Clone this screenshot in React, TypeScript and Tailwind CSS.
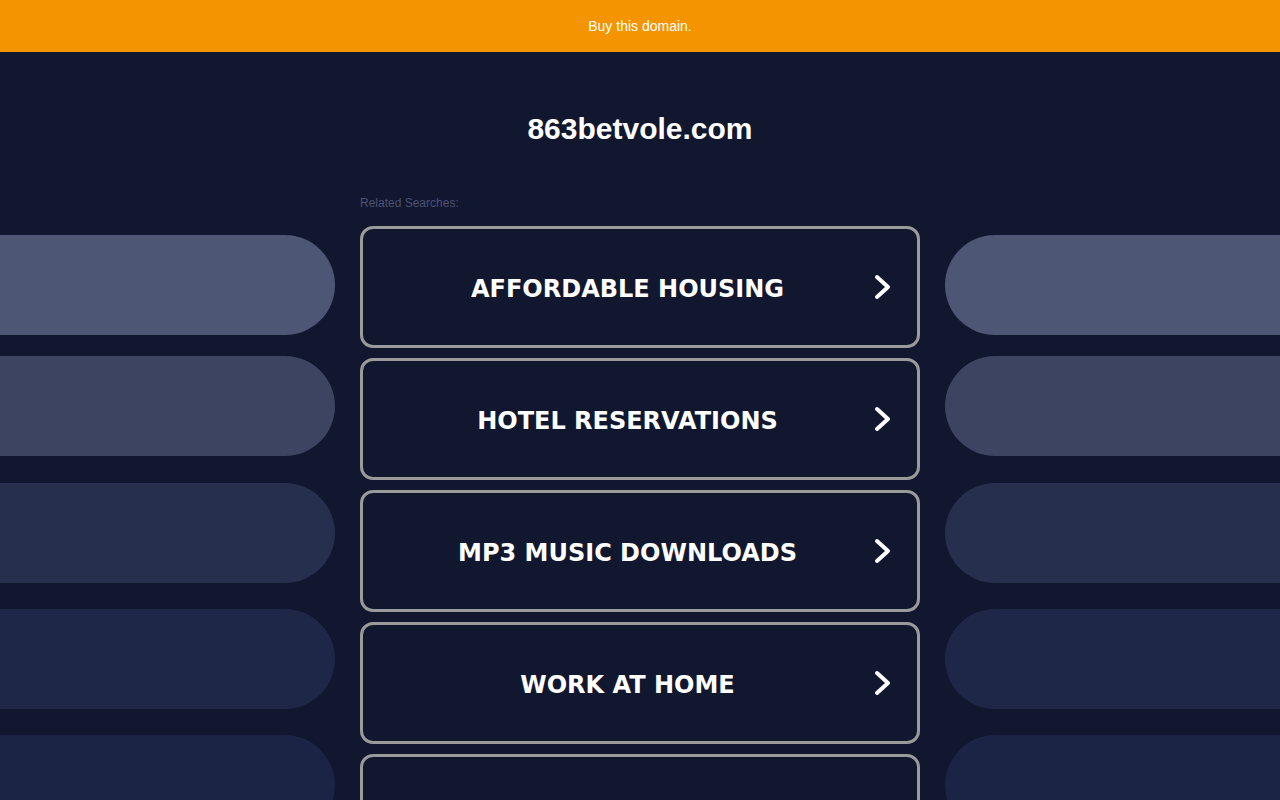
import React from 'react';

const searches = ['AFFORDABLE HOUSING', 'HOTEL RESERVATIONS', 'MP3 MUSIC DOWNLOADS', 'WORK AT HOME', ''];

const Chevron: React.FC = () => (
  <svg width="17" height="26" viewBox="0 0 17 26" className="shrink-0">
    <polyline
      points="3,3 14,13 3,23"
      fill="none"
      stroke="#ffffff"
      strokeWidth="4"
      strokeLinecap="round"
      strokeLinejoin="round"
    />
  </svg>
);

const Pills: React.FC<{ side: 'left' | 'right' }> = ({ side }) => {
  const round = side === 'left' ? 'rounded-r-[50px]' : 'rounded-l-[50px]';
  return (
    <div className="flex flex-col pt-[183px]">
      <div className={`h-[100px] bg-[#4d5675] ${round}`} />
      <div className={`mt-[21px] h-[100px] bg-[#3c4462] ${round}`} />
      <div className={`mt-[27px] h-[100px] bg-[#262f4e] ${round}`} />
      <div className={`mt-[26px] h-[100px] bg-[#1e2748] ${round}`} />
      <div className={`mt-[26px] h-[100px] bg-[#1c2446] ${round}`} />
    </div>
  );
};

export default function App() {
  return (
    <div className="min-h-screen overflow-hidden bg-[#11172e] font-['Liberation_Sans',Arial,sans-serif]">
      <div className="flex h-[52px] items-center justify-center bg-[#f39400] text-[14px] text-white">
        Buy this domain.
      </div>

      <div className="flex h-[748px] overflow-hidden">
        <div className="w-[335px] shrink-0">
          <Pills side="left" />
        </div>

        <div className="mx-[25px] flex w-[560px] shrink-0 flex-col pt-[59px]">
          <h1 className="text-center text-[30px] font-bold leading-[36px] text-white">
            863betvole.com
          </h1>
          <p className="mt-[49px] text-[12px] leading-[14px] text-[#4b5275]">Related Searches:</p>
          <div className="mt-[16px] flex flex-col gap-[10px]">
            {searches.map((s, i) => (
              <div
                key={i}
                className="flex h-[122px] shrink-0 items-center rounded-[13px] border-[3px] border-[#9a9a9a] pl-[18px] pr-[26px]"
              >
                <span className="flex-1 pt-[3px] text-center font-['DejaVu_Sans',Verdana,sans-serif] text-[24px] font-bold text-white">
                  {s}
                </span>
                {s && <Chevron />}
              </div>
            ))}
          </div>
        </div>

        <div className="flex-1">
          <Pills side="right" />
        </div>
      </div>
    </div>
  );
}
